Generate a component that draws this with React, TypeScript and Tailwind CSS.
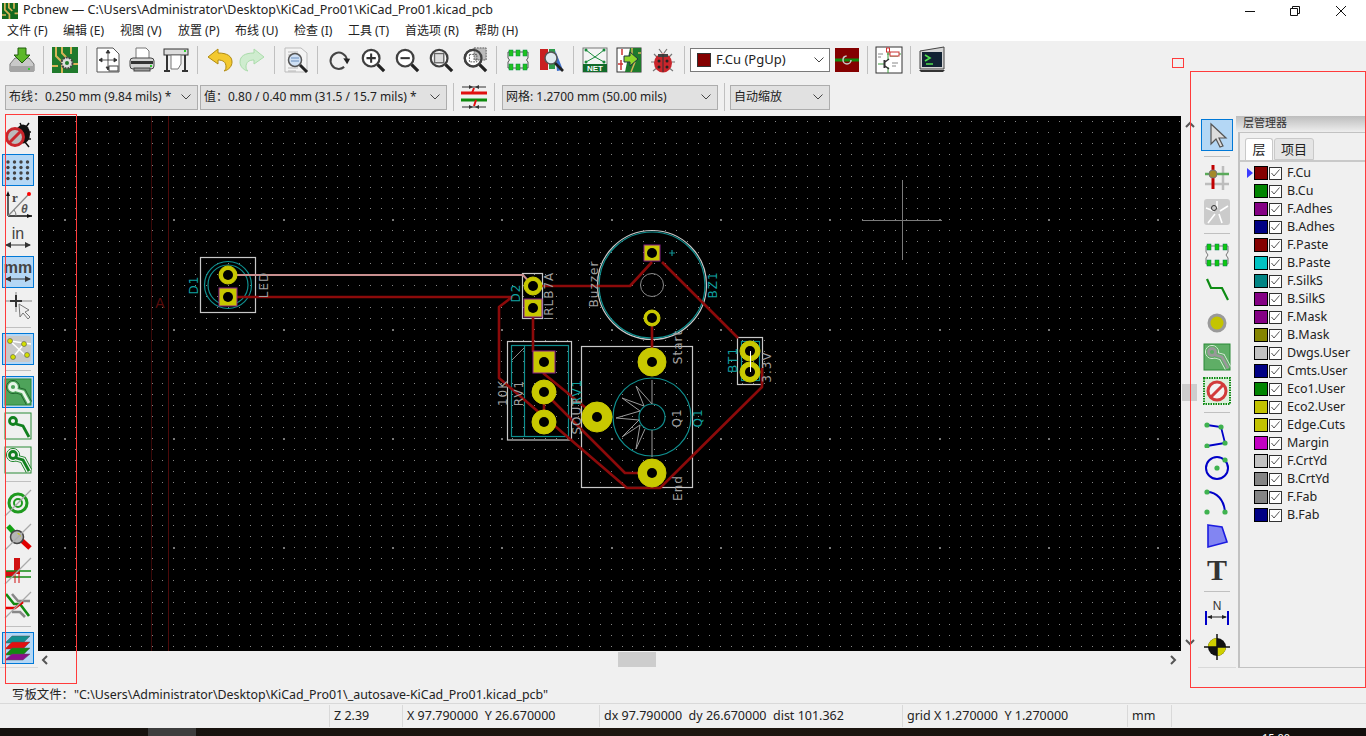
import type { ReactNode } from "react";

const FONT = { ui: "font-['Noto_Sans','Noto_Sans_CJK_SC',sans-serif]" };

const LAYERS: [string, string][] = [
  ["F.Cu", "#840000"],
  ["B.Cu", "#008400"],
  ["F.Adhes", "#840084"],
  ["B.Adhes", "#000084"],
  ["F.Paste", "#840000"],
  ["B.Paste", "#00c2c2"],
  ["F.SilkS", "#008484"],
  ["B.SilkS", "#840084"],
  ["F.Mask", "#840084"],
  ["B.Mask", "#848400"],
  ["Dwgs.User", "#c2c2c2"],
  ["Cmts.User", "#000084"],
  ["Eco1.User", "#008400"],
  ["Eco2.User", "#c2c200"],
  ["Edge.Cuts", "#c2c200"],
  ["Margin", "#c200c2"],
  ["F.CrtYd", "#c2c2c2"],
  ["B.CrtYd", "#848484"],
  ["F.Fab", "#848484"],
  ["B.Fab", "#000084"],
];

const MENUS: [string, string][] = [
  ["文件 (F)", "w-[56px]"],
  ["编辑 (E)", "w-[57px]"],
  ["视图 (V)", "w-[58px]"],
  ["放置 (P)", "w-[57px]"],
  ["布线 (U)", "w-[59px]"],
  ["检查 (I)", "w-[54px]"],
  ["工具 (T)", "w-[57px]"],
  ["首选项 (R)", "w-[70px]"],
  ["帮助 (H)", "w-[56px]"],
];

// tiny icon wrapper, all icons are drawn on a 28 box
const Ico = ({ children, size = 28 }: { children: ReactNode; size?: number }) => (
  <svg width={size} height={size} viewBox="0 0 28 28" fill="none">
    {children}
  </svg>
);

const Btn = ({ children, on }: { children: ReactNode; on?: boolean }) => (
  <div
    className={`w-[32px] h-[32px] my-px flex items-center justify-center shrink-0 border ${
      on ? "bg-[#b4d7f5] border-[#0078d7]" : "border-transparent"
    }`}
  >
    {children}
  </div>
);

const TopBtn = ({ children }: { children: ReactNode }) => (
  <div className="w-[34px] h-[34px] flex items-center justify-center shrink-0">{children}</div>
);

const SepH = () => <div className="w-[26px] h-px bg-[#c0c0c0] my-[4px] shrink-0" />;
const SepV = () => <div className="w-px h-[28px] bg-[#c0c0c0] mx-[4px] shrink-0" />;

const Combo = ({ label, className }: { label: string; className: string }) => (
  <div
    className={`h-[25px] flex items-center justify-between pl-[3px] pr-[6px] bg-[#e1e1e1] border border-[#adadad] text-[12px] text-[#222] whitespace-nowrap ${className}`}
  >
    <span>{label}</span>
    <Chevron />
  </div>
);

const Chevron = () => (
  <svg width="10" height="6" viewBox="0 0 10 6" fill="none">
    <path d="M.5.5 5 5 9.5.5" stroke="#444" />
  </svg>
);

const Field = ({ children, className }: { children?: ReactNode; className: string }) => (
  <div className={`h-full flex items-center pl-[4px] border-r border-[#d9d9d9] whitespace-pre ${className}`}>
    {children}
  </div>
);

const Save = () => (
  <Ico>
    <path d="M2 18 7 12h14l5 6v7H2z" fill="#c9c9c9" stroke="#777" />
    <rect x="2" y="20" width="24" height="6" rx="1" fill="#a5a5a5" />
    <rect x="20" y="22" width="2" height="2" fill="#3c3" />
    <path d="M10 2h8v7h4l-8 8-8-8h4z" fill="#5cb82a" stroke="#1f5d0a" />
  </Ico>
);

const Board = ({ gear }: { gear?: boolean }) => (
  <Ico>
    <rect x="1" y="1" width="26" height="26" fill="#1f7a2c" />
    <path d="M5 1v9l6 6v11M11 1v6l5 5M20 1v7M27 18h-6M1 20h6" stroke="#d8b458" strokeWidth="2" />
    {gear && <circle cx="16" cy="17" r="5.5" fill="#ddd" stroke="#444" strokeWidth="2" strokeDasharray="2 1" />}
    {gear && <circle cx="16" cy="17" r="2" fill="#1f7a2c" />}
  </Ico>
);

const PageSize = () => (
  <Ico>
    <path d="M3 2h16l6 6v18H3z" fill="#fff" stroke="#555" />
    <path d="M14 4v20M5 14h18M14 4l-2 3h4zM14 24l-2-3h4zM5 14l3-2v4zM23 14l-3-2v4z" stroke="#333" fill="#333" strokeWidth=".8" />
    <rect x="15" y="20" width="9" height="5" fill="#fff" stroke="#444" />
  </Ico>
);

const Printer = () => (
  <Ico>
    <path d="M8 2h10l3 3v8H8z" fill="#fff" stroke="#777" />
    <rect x="2" y="12" width="24" height="11" rx="3" fill="#d4d4d4" stroke="#444" />
    <rect x="3" y="15" width="22" height="3" fill="#333" />
    <rect x="6" y="22" width="16" height="3" fill="#999" stroke="#444" />
    <rect x="22" y="19" width="2" height="2" fill="#3c3" />
  </Ico>
);

const Plotter = () => (
  <Ico>
    <rect x="2" y="3" width="24" height="6" fill="#ddd" stroke="#333" />
    <path d="M5 9v16M23 9v16M2 25h6M20 25h6" stroke="#333" strokeWidth="2" />
    <path d="M9 9h10v9l-3 5H9z" fill="#fff" stroke="#777" />
    <rect x="22" y="4" width="2" height="2" fill="#3c3" />
  </Ico>
);

const Undo = ({ redo }: { redo?: boolean }) => (
  <Ico>
    <g transform={redo ? "matrix(-1 0 0 1 28 0)" : undefined}>
      <path
        d="M13 3 3 11l10 7v-4c5 0 8 2 8 7 0 2-1 3-2 4 5-1 8-5 8-9 0-6-5-9-14-9z"
        fill={redo ? "#cfeccf" : "#f3c930"}
        stroke={redo ? "#aadcaa" : "#b08a10"}
      />
    </g>
  </Ico>
);

const Find = () => (
  <Ico>
    <path d="M3 2h16l6 5v19H3z" fill="#f4f4f4" stroke="#bbb" />
    <path d="M6 6h10M6 9h8M6 22h10M6 25h8" stroke="#b9b9b9" />
    <circle cx="13" cy="14" r="6.5" fill="#cfe0f4" stroke="#555" strokeWidth="1.5" />
    <path d="M9 12h8M9 15h8" stroke="#6a8fbd" />
    <path d="m18 19 7 7" stroke="#222" strokeWidth="3" />
  </Ico>
);

const Zoom = ({ kind }: { kind: string }) => (
  <Ico size={26}>
    <circle cx="12" cy="12" r="9" stroke="#404040" strokeWidth="2.4" fill="#fff" />
    <path d="m19 19 7 7" stroke="#222" strokeWidth="3.4" />
    {kind === "in" && <path d="M7 12h10M12 7v10" stroke="#333" strokeWidth="2.2" />}
    {kind === "out" && <path d="M7 12h10" stroke="#333" strokeWidth="2.2" />}
    {kind === "fit" && <rect x="7" y="7" width="10" height="10" fill="#ddd" stroke="#666" strokeWidth="1.5" />}
    {kind === "area" && (
      <>
        <rect x="13" y="1" width="13" height="13" fill="#bbb" stroke="#555" strokeDasharray="2 1" />
        <circle cx="12" cy="12" r="9" stroke="#404040" strokeWidth="2.4" />
        <rect x="8" y="8" width="8" height="8" stroke="#555" strokeDasharray="2 1" />
      </>
    )}
  </Ico>
);

const Refresh = () => (
  <Ico size={24}>
    <path d="M20 22a9.5 9.5 0 1 1 3-9" stroke="#444" strokeWidth="2.4" />
    <path d="m19 12 8 .5-3.5 6.5z" fill="#222" />
  </Ico>
);

const Chip = () => (
  <Ico>
    <path d="M4 6h20v6l-1.500 2 1.500 2v6H4v-6l1.500-2L4 12z" fill="#eee" stroke="#555" />
    {[5, 12, 19].map(x => (
      <g key={x}>
        <rect x={x} y="4" width="4" height="6" fill="#1fc21f" stroke="#084" strokeWidth=".5" />
        <rect x={x} y="18" width="4" height="6" fill="#1fc21f" stroke="#084" strokeWidth=".5" />
      </g>
    ))}
  </Ico>
);

const Library = () => (
  <Ico>
    <path d="M2 3h8v21H2z" fill="#c92020" />
    <path d="M11 3h6v20h-6z" fill="#2e9b4c" />
    <path d="m17 4 8 20-6 1z" fill="#3b6ec9" />
    <circle cx="13" cy="12" r="6" fill="#dfe9ef" stroke="#555" strokeWidth="1.5" />
    <path d="m17 17 8 8" stroke="#222" strokeWidth="2.6" />
  </Ico>
);

const Net = () => (
  <Ico>
    <rect x="2" y="2" width="24" height="24" fill="#f4f4f4" stroke="#777" />
    <path d="M5 4l9 7 9-7M14 11 5 16M14 11l9 5" stroke="#178a3a" />
    <circle cx="5" cy="4" r="1.500" fill="#178a3a" />
    <circle cx="23" cy="4" r="1.500" fill="#178a3a" />
    <circle cx="5" cy="16" r="1.500" fill="#178a3a" />
    <circle cx="23" cy="16" r="1.500" fill="#178a3a" />
    <rect x="2" y="18" width="24" height="8" fill="#126b2b" />
    <text x="14" y="25" textAnchor="middle" fontSize="8" fontWeight="700" fill="#fff" fontFamily="Liberation Sans, sans-serif">NET</text>
  </Ico>
);

const NetSwap = () => (
  <Ico>
    <rect x="2" y="2" width="24" height="24" fill="#fff" stroke="#333" />
    <path d="M15 2h11v24H10z" fill="#1f7a2c" />
    <path d="M17 2v8M23 7h3M16 26l4-10" stroke="#d8b458" strokeWidth="1.500" />
    <path d="M7 3v6M3 18h5M6 14v10" stroke="#c33" strokeWidth="1.500" />
    <path d="M9 10h6V6l8 7-8 7v-4H9z" fill="#8fd62a" stroke="#234" />
  </Ico>
);

const Bug = () => (
  <Ico>
    <path d="M5 8 9 12M23 8l-4 4M2 16h6M26 16h-6M4 25l5-4M24 25l-5-4M10 3l3 4M18 3l-3 4" stroke="#777" strokeWidth="1.200" />
    <ellipse cx="14" cy="17" rx="9" ry="9.500" fill="#c9252b" />
    <path d="M9 8h10v3H9z" fill="#444" />
    <path d="M14 8v18" stroke="#333" />
    <circle cx="10" cy="15" r="1.500" fill="#222" />
    <circle cx="18" cy="15" r="1.500" fill="#222" />
    <circle cx="10" cy="21" r="1.500" fill="#222" />
    <circle cx="18" cy="21" r="1.500" fill="#222" />
  </Ico>
);

const Schematic = () => (
  <Ico>
    <rect x="1" y="1" width="26" height="26" fill="#fff" stroke="#333" />
    <path d="M13 2v6M12 8H26M13 8v6M13 21v6M3 18h6M15 10l8 0" stroke="#3a9a3a" />
    <rect x="15" y="6" width="9" height="4" fill="#fff" stroke="#c33" />
    <rect x="11.500" y="2" width="3" height="4" fill="#fff" stroke="#c33" />
    <path d="m10 16 4-3M10 20l4 3" stroke="#333" strokeWidth="1.500" />
    <path d="M9.500 14v8" stroke="#333" strokeWidth="2" />
    <path d="M3 8h5M3 11h3M17 17h6M17 20h4" stroke="#888" />
  </Ico>
);

const Terminal = () => (
  <Ico>
    <path d="M2 5 26 1v22L2 23z" fill="#d5d5d5" stroke="#444" />
    <rect x="4" y="6" width="20" height="15" fill="#123" />
    <path d="m7 9 5 3-5 3M8 18h7" stroke="#4fe04f" strokeWidth="1.600" />
    <path d="M1 24h26l-2 2H3z" fill="#333" />
  </Ico>
);

const DrcBug = () => (
  <Ico>
    <path d="M16 1l2 4M25 1l-3 4M27 10h-4M27 17h-4M25 25l-4-5" stroke="#111" strokeWidth="1.500" />
    <ellipse cx="19" cy="12" rx="7" ry="9.500" fill="#111" />
    <circle cx="11" cy="15" r="8.500" fill="#bbb" stroke="#c9252b" strokeWidth="3" />
    <path d="m5 21 12-12" stroke="#c9252b" strokeWidth="3" />
  </Ico>
);

const Dots = () => (
  <Ico>
    {[6, 11.500, 17, 22.500].map(y =>
      [4, 10.500, 17, 23.500].map(x => <circle key={`${x}-${y}`} cx={x} cy={y} r="1.700" fill="#444" />)
    )}
  </Ico>
);

const Polar = () => (
  <Ico>
    <path d="M4 26V3M4 26h24" stroke="#111" strokeWidth="1.300" />
    <path d="m4 1-2 5h4zM28 26l-5-2v4z" fill="#111" />
    <path d="M4 26 24 5" stroke="#888" strokeWidth="1.200" />
    <circle cx="25" cy="4" r="2" fill="#f00" />
    <path d="M12 26a8 8 0 0 0-2-6" stroke="#777" />
    <text x="8" y="12" fontSize="13" fontWeight="700" fill="#444" fontFamily="Liberation Serif, serif">r</text>
    <text x="17" y="23" fontSize="12" fontWeight="700" fontStyle="italic" fill="#555" fontFamily="Liberation Sans, sans-serif">θ</text>
  </Ico>
);

const Unit = ({ label, bold }: { label: string; bold?: boolean }) => (
  <Ico>
    <text x="14" y="15" textAnchor="middle" fontSize="16" fontWeight={bold ? "700" : "400"} fill="#444" fontFamily="Liberation Sans, sans-serif">{label}</text>
    <path d="M2 21h24" stroke="#333" />
    <path d="m1 21 6-3v6zM27 21l-6-3v6z" fill="#333" />
  </Ico>
);

const Cursor = () => (
  <Ico>
    <path d="M2 9h26M12 0v20" stroke="#bbb" strokeWidth="2" />
    <path d="M6 9h12M12 3v12" stroke="#333" strokeWidth="2" />
    <path d="m15 12 1 13 3-4 5 6 2-2-5-5 4-2z" fill="#eee" stroke="#777" />
  </Ico>
);

const Rats = () => (
  <div className="w-[26px] h-[26px] rounded-[3px] bg-[#c9c9c9] relative">
    <svg width="26" height="26" viewBox="0 0 26 26" fill="none">
      <path d="M5 5 21 20M19 8 8 21M5 5l21 3" stroke="#fff" strokeWidth="1.500" />
      <circle cx="5" cy="5" r="2.500" fill="#d4e000" stroke="#555" strokeWidth=".6" />
      <circle cx="19" cy="8" r="2.500" fill="#d4e000" stroke="#555" strokeWidth=".6" />
      <circle cx="8" cy="21" r="2.500" fill="#d4e000" stroke="#555" strokeWidth=".6" />
      <circle cx="22" cy="19" r="2.500" fill="#d4e000" stroke="#555" strokeWidth=".6" />
    </svg>
  </div>
);

const PAD_ROUTE = "M12 12l7 2 6 11";

// pad and track shape, optional clearance outline round it
const PadTrack = ({
  back,
  outline,
  color = "#12801f",
}: {
  back?: string;
  outline?: string;
  color?: string;
}) => (
  <Ico>
    <rect x="1" y="1" width="26" height="26" fill={back ?? "none"} stroke="#2a8a36" />
    {outline && (
      <>
        <circle cx="9" cy="9" r="6.500" stroke={outline} strokeWidth="1" />
        <path d={PAD_ROUTE} stroke={outline} strokeWidth="7" />
        <path d={PAD_ROUTE} stroke={back ?? "#f0f0f0"} strokeWidth="5.400" />
        <circle cx="9" cy="9" r="6" fill={back ?? "#f0f0f0"} />
      </>
    )}
    <circle cx="9" cy="9" r="3.500" stroke={color} strokeWidth="2.800" />
    <path d={PAD_ROUTE} stroke={color} strokeWidth="2.800" />
  </Ico>
);

const ViaSketch = () => (
  <Ico>
    <circle cx="14" cy="14" r="9" stroke="#1f9a1f" strokeWidth="3" />
    <circle cx="14" cy="14" r="4" stroke="#1f9a1f" strokeWidth="2" />
    <path d="m1 27 26-26" stroke="#aaa" strokeWidth="1.300" />
  </Ico>
);

const ViaTrack = () => (
  <Ico>
    <path d="M4 3 14 14" stroke="#14a014" strokeWidth="5" />
    <path d="M14 14l12 11" stroke="#e00000" strokeWidth="5" />
    <circle cx="13" cy="14" r="6.500" fill="#b5b5b5" stroke="#444" strokeWidth="1.500" />
    <path d="M13 10a4 4 0 0 1 4 4z" fill="#c8c800" />
    <path d="m1 27 26-26" stroke="#aaa" strokeWidth="1.200" />
  </Ico>
);

const TrackSketch = () => (
  <Ico>
    <rect x="10" y="1" width="6" height="16" fill="#d01010" />
    <rect x="1" y="14" width="9" height="6" fill="#d01010" />
    <path d="M1 14h26M1 20h26" stroke="#128a12" strokeWidth="1.300" />
    <path d="M11 14v12M15 14v12" stroke="#d01010" />
    <path d="m1 27 26-26" stroke="#aaa" strokeWidth="1.200" />
  </Ico>
);

const PairSketch = () => (
  <Ico>
    <path d="m2 3 8 10h6l9 12" stroke="#128a12" strokeWidth="2.600" />
    <path d="m8 3 6 7h12" stroke="#888" strokeWidth="2.600" />
    <path d="M1 17h10l8-6" stroke="#e00000" strokeWidth="2.600" />
    <path d="M8 21h8l5 5" stroke="#888" strokeWidth="2.600" />
    <path d="m1 27 26-26" stroke="#aaa" strokeWidth="1.200" />
  </Ico>
);

const LayerStack = () => (
  <Ico>
    <path d="M8 2h18l-7 7H1z" fill="#148f8f" stroke="#555" strokeWidth=".5" />
    <path d="M8 8h18l-7 7H1z" fill="#e11010" stroke="#555" strokeWidth=".5" />
    <path d="M8 14h18l-7 7H1z" fill="#128a12" stroke="#555" strokeWidth=".5" />
    <path d="M8 20h18l-7 6H1z" fill="#8a0f8a" stroke="#555" strokeWidth=".5" />
  </Ico>
);

const Arrow = () => (
  <Ico>
    <path d="M8 3v20l5-5 4 8 3-1-4-8h7z" fill="#ddd" stroke="#555" strokeWidth="1.200" />
  </Ico>
);

const Highlight = () => (
  <Ico>
    <path d="M2 20h24M20 2v24" stroke="#bdbdbd" strokeWidth="2.500" />
    <path d="M2 10h24" stroke="#5aaa5a" strokeWidth="2.500" />
    <path d="M10 1v24" stroke="#c00000" strokeWidth="3" />
    <circle cx="10" cy="10" r="4" fill="#a38a2a" stroke="#777" />
  </Ico>
);

const LocalRats = () => (
  <div className="w-[26px] h-[26px] rounded-[3px] bg-[#cbcbcb]">
    <svg width="26" height="26" viewBox="0 0 26 26" fill="none">
      <path d="M13 9V2M10 12 2 9M11 15 4 24M15 15l3 9M16 12l8-5" stroke="#fff" strokeWidth="1.600" />
      <circle cx="10" cy="9" r="2.500" stroke="#333" />
    </svg>
  </div>
);

const Footprint = () => (
  <Ico>
    <path d="M3 5h22v6l-2 3 2 3v6H3v-6l2-3-2-3z" fill="#f0f0f0" stroke="#777" />
    {[4, 12, 20].map(x => (
      <g key={x}>
        <rect x={x} y="3" width="4" height="6" fill="#10c810" stroke="#075" strokeWidth=".5" />
        <rect x={x} y="19" width="4" height="6" fill="#10c810" stroke="#075" strokeWidth=".5" />
      </g>
    ))}
  </Ico>
);

const Wire = () => (
  <Ico>
    <path d="M4 4 8 13h11l6 12" stroke="#0e8c14" strokeWidth="2.200" />
  </Ico>
);

const Via = () => (
  <Ico>
    <circle cx="14" cy="14" r="8" fill="#c4c400" stroke="#9a9a9a" strokeWidth="3" />
  </Ico>
);

const Keepout = () => (
  <Ico>
    <rect x="1" y="1" width="26" height="26" fill="#dff0df" stroke="#0e8c14" strokeWidth="2" strokeDasharray="1.500 1" />
    <circle cx="14" cy="14" r="9" fill="#f3f3f3" stroke="#d23b3b" strokeWidth="3" />
    <path d="m8 20 12-12" stroke="#d23b3b" strokeWidth="3" />
  </Ico>
);

const Line = () => (
  <Ico>
    <path d="M4 5 18 7l4 16L4 26" stroke="#0000c8" strokeWidth="1.800" />
    {[[4, 5], [18, 7], [22, 23], [4, 26]].map(([x, y]) => (
      <circle key={x + y} cx={x} cy={y} r="2.600" fill="#3fb24f" />
    ))}
  </Ico>
);

const Circle = () => (
  <Ico>
    <circle cx="14" cy="14" r="11" stroke="#0000c8" strokeWidth="2" />
    <circle cx="14" cy="14" r="2.600" fill="#3fb24f" />
    <circle cx="22" cy="6" r="2.600" fill="#3fb24f" />
  </Ico>
);

const Arc = () => (
  <Ico>
    <path d="M4 4c10 0 17 8 18 20" stroke="#0000c8" strokeWidth="2" />
    <circle cx="4" cy="4" r="2.600" fill="#3fb24f" />
    <circle cx="4" cy="24" r="2.600" fill="#3fb24f" />
    <circle cx="22" cy="24" r="2.600" fill="#3fb24f" />
  </Ico>
);

const Poly = () => (
  <Ico>
    <path d="m5 3 14 2 5 15L5 25z" fill="#8285f2" stroke="#1c1ce0" strokeWidth="1.600" />
  </Ico>
);

const Dim = () => (
  <Ico>
    <text x="14" y="11" textAnchor="middle" fontSize="12" fill="#333" fontFamily="Liberation Sans, sans-serif">N</text>
    <path d="M3 12v14M25 12v14" stroke="#0000c8" strokeWidth="2" />
    <path d="M5 18h18" stroke="#222" />
    <path d="m4 18 5-2v4zM24 18l-5-2v4z" fill="#222" />
  </Ico>
);

const Target = () => (
  <Ico>
    <circle cx="14" cy="14" r="9" fill="#111" />
    <path d="M14 5a9 9 0 0 0-9 9h9zM14 23a9 9 0 0 0 9-9h-9z" fill="#cfcf00" />
    <path d="M1 14h26M14 1v26" stroke="#111" strokeWidth="1.500" />
  </Ico>
);

const LeftTools = () => (
  <div className="w-[38px] shrink-0 flex flex-col items-center pt-[3px] pl-[1px] pr-[3px] h-[552px] border-b border-[#d9d9d9]">
    <Btn><DrcBug /></Btn>
    <Btn on><Dots /></Btn>
    <Btn><Polar /></Btn>
    <Btn><Unit label="in" /></Btn>
    <Btn on><Unit label="mm" bold /></Btn>
    <Btn><Cursor /></Btn>
    <SepH />
    <Btn on><Rats /></Btn>
    <SepH />
    <Btn on><PadTrack back="#4ea35a" color="#e8f5e8" outline="#1c5f28" /></Btn>
    <Btn><PadTrack /></Btn>
    <Btn><PadTrack outline="#12801f" /></Btn>
    <SepH />
    <Btn><ViaSketch /></Btn>
    <Btn><ViaTrack /></Btn>
    <Btn><TrackSketch /></Btn>
    <Btn><PairSketch /></Btn>
    <SepH />
    <Btn on><LayerStack /></Btn>
  </div>
);

const RightTools = () => (
  <div className="w-[38px] shrink-0 flex flex-col items-center pt-[2px] h-[552px] border-b border-[#d9d9d9]">
    <Btn on><Arrow /></Btn>
    <SepH />
    <Btn><Highlight /></Btn>
    <Btn><LocalRats /></Btn>
    <SepH />
    <Btn><Footprint /></Btn>
    <Btn><Wire /></Btn>
    <Btn><Via /></Btn>
    <Btn><PadTrack back="#5fae66" color="#999" outline="#dfeee0" /></Btn>
    <Btn><Keepout /></Btn>
    <SepH />
    <Btn><Line /></Btn>
    <Btn><Circle /></Btn>
    <Btn><Arc /></Btn>
    <Btn><Poly /></Btn>
    <Btn>
      <span className="font-['Liberation_Serif',serif] font-bold text-[30px] leading-none text-[#333]">T</span>
    </Btn>
    <SepH />
    <Btn><Dim /></Btn>
    <Btn><Target /></Btn>
  </div>
);

const LayerPanel = () => (
  <div className="flex-1 h-[552px] flex flex-col">
    <div className="h-[16px] pl-[7px] text-[11px] leading-[13px] text-[#333] bg-gradient-to-b from-[#bdbdbd] to-[#eeeeee]">层管理器</div>
    <div className="ml-[2px] flex-1 border-l-2 border-t border-b border-[#c2c2c2] pt-[4px] pl-[5px]">
      <div className="flex items-end h-[25px] gap-[1px] border-b-2 border-[#c9c9c9] -ml-[5px] pl-[5px]">
        <div className="w-[28px] h-[22px] bg-white border border-b-0 border-[#c9c9c9] rounded-t-[3px] text-center text-[13px] leading-[21px] text-[#222]">层</div>
        <div className="w-[40px] h-[22px] bg-[#e5e5e5] border border-[#c9c9c9] rounded-t-[3px] text-center text-[13px] leading-[21px] text-[#222]">项目</div>
      </div>
      <div className="pt-[2px]">
        {LAYERS.map(([name, color], i) => (
          <div key={name} className="h-[18px] flex items-center text-[12.5px] text-[#222] relative">
            {i === 0 && (
              <svg className="absolute left-[2px] top-[4px]" width="6" height="10" viewBox="0 0 6 10">
                <path d="M0 0 6 5 0 10z" fill="#3c3cff" />
              </svg>
            )}
            <div className="ml-[9px] w-[14px] h-[14px] border border-black" style={{ backgroundColor: color }} />
            <div className="ml-[1px] w-[13px] h-[13px] border border-[#333] bg-white flex items-center justify-center">
              <svg width="9" height="8" viewBox="0 0 9 8" fill="none">
                <path d="M.5 4 3 7 8.500.5" stroke="#555" />
              </svg>
            </div>
            <span className="ml-[5px]">{name}</span>
          </div>
        ))}
      </div>
    </div>
  </div>
);

// page coordinates of the grid dots, every 10th one is brighter
const gridDots = (bright: boolean) => {
  let d = "";
  const step = 10.93;
  for (let i = -22; i < 84; i++) {
    for (let j = -20; j < 30; j++) {
      const isBright = i % 10 === 0 && j % 10 === 0;
      if (isBright !== bright) continue;
      const x = Math.round(282.7 + i * step);
      const y = Math.round(328.7 + j * step);
      d += `M${x} ${y}h${bright ? 2 : 1}v${bright ? 2 : 1}h-${bright ? 2 : 1}z`;
    }
  }
  return d;
};

const Pad = ({ x, y, r, h = 5 }: { x: number; y: number; r: number; h?: number }) => (
  <g>
    <circle cx={x} cy={y} r={r} fill="#c8c800" stroke="#c8c800" />
    <circle cx={x} cy={y} r={h} fill="#000" />
  </g>
);

const SquarePad = ({ x, y, s, h = 5 }: { x: number; y: number; s: number; h?: number }) => (
  <g>
    <rect x={x - s / 2} y={y - s / 2} width={s} height={s} fill="#c8c800" stroke="#8a1f8a" />
    <rect x={x - s / 2 + 1} y={y - s / 2 + 1} width={s - 2} height={s - 2} fill="#c8c800" />
    <circle cx={x} cy={y} r={h} fill="#000" />
  </g>
);

// rotated silkscreen label
const Silk = ({ x, y, t, c = "#a0a0a0", size = 12 }: { x: number; y: number; t: string; c?: string; size?: number }) => (
  <text
    x={x}
    y={y}
    transform={`rotate(-90 ${x} ${y})`}
    textAnchor="middle"
    dominantBaseline="central"
    fontSize={size}
    fill={c}
    letterSpacing="1"
    fontFamily="DejaVu Sans, sans-serif"
  >
    {t}
  </text>
);

const TRACK = "#8c0a0a";
const TEAL = "#10a0a0";

const Canvas = () => (
  <svg className="block w-[1143px] h-[535px] bg-black" viewBox="38 116 1143 535" fill="none">
    <path d={gridDots(false)} fill="#858585" />
    <path d={gridDots(true)} fill="#777" />
    <path d="M151.500 116v535" stroke="#3a0808" />
    <path d="M168.500 116v535" stroke="#4c0a0a" />
    <text x="160" y="308" textAnchor="middle" fontSize="14" fill="#5a0c0c" fontFamily="Liberation Sans, sans-serif">A</text>

    {/* crosshair */}
    <path d="M862 220.500h80M902.500 180v80" stroke="#7a7a7a" />

    {/* footprints */}
    <g stroke="#c8c8c8" strokeWidth="1.200">
      <rect x="200.500" y="257.500" width="55" height="55" />
      <rect x="522.500" y="273.500" width="20" height="45" />
      <rect x="507.500" y="341.500" width="64" height="98.500" />
      <rect x="581.500" y="346.500" width="111" height="141" />
      <rect x="737.500" y="337.500" width="25" height="47" />
      <circle cx="652" cy="285" r="54.500" />
    </g>
    <g stroke="#0f8f8f" strokeWidth="1.200">
      <circle cx="228" cy="285" r="23.500" />
      <circle cx="228" cy="285" r="20" />
      <circle cx="652" cy="285" r="53" />
      <rect x="511.500" y="345.500" width="57" height="91" />
      <path d="M524.500 346v91" />
      <rect x="741.500" y="341.500" width="18" height="39" />
      <circle cx="652" cy="417" r="39" />
      <circle cx="652" cy="417" r="13" />
      <path d="M669 253h6M672 250v6" />
    </g>
    <circle cx="652" cy="285" r="11.500" stroke="#8a8a8a" />
    <path d="M512 360 524 348" stroke="#8a8a8a" />
    <path
      d="M652 380v24L636 386l8 20-22-8 18 13-24 7 23 2-17 17 18-12-4 24 9-20M652 430v27"
      stroke="#9a9a9a"
      strokeWidth="1"
    />

    {/* tracks */}
    <g stroke={TRACK} strokeWidth="2.600" strokeLinejoin="round">
      <path d="M228 297h284l-13 10v71l128 110h33l102-101v-19" />
      <path d="M533 286h97l22-24" />
      <path d="M662 262l76 76" />
      <path d="M533 308v44" />
      <path d="M652 318v44" />
      <path d="M543 373l54 44" />
      <path d="M552 400l73 73h27" />
      <path d="M544 392v30" />
    </g>
    <path d="M228 275h295l9 10" stroke="#c98f8f" strokeWidth="2" />

    {/* pads */}
    <Pad x={228} y={275} r={9} />
    <SquarePad x={228} y={297} s={18} />
    <Pad x={533} y={286} r={9} />
    <SquarePad x={533} y={308} s={18} />
    <SquarePad x={652} y={253} s={16} />
    <Pad x={652} y={318} r={8} />
    <Pad x={652} y={362} r={14} />
    <Pad x={652} y={473} r={14} />
    <Pad x={597} y={417} r={15} />
    <SquarePad x={544} y={362} s={22} />
    <Pad x={544} y={392} r={12} />
    <Pad x={544} y={422} r={12} />
    <Pad x={750} y={351} r={10} />
    <Pad x={750} y={372} r={10} />
    <path d="M750.500 351v21" stroke="#fff" />

    {/* labels */}
    <Silk x={194} y={285} t="D1" c={TEAL} />
    <Silk x={264} y={285} t="LED" />
    <Silk x={516} y={293} t="D2" c={TEAL} />
    <Silk x={549} y={296} t="IRLB7A" />
    <Silk x={594} y={284} t="Buzzer" />
    <Silk x={713} y={285} t="BZ1" c={TEAL} />
    <Silk x={733} y={360} t="BT1" c={TEAL} />
    <Silk x={767} y={367} t="3.3V" />
    <Silk x={678} y={347} t="Start" />
    <Silk x={677} y={418} t="Q1" />
    <Silk x={698} y={418} t="Q1" c={TEAL} />
    <Silk x={678} y={488} t="End" />
    <Silk x={503} y={393} t="10K" />
    <Silk x={519} y={393} t="RV1" />
    <Silk x={577} y={392} t="RV1" c={TEAL} />
    <Silk x={577} y={416} t="SOUT" />
  </svg>
);

const HScroll = () => (
  <div className="h-[17px] flex items-center relative">
    <svg className="ml-[3px]" width="8" height="10" viewBox="0 0 8 10" fill="none">
      <path d="M6 1 2 5l4 4" stroke="#555" strokeWidth="2" />
    </svg>
    <div className="ml-[569px] w-[38px] h-[15px] bg-[#cdcdcd]" />
    <svg className="ml-auto mr-[21px]" width="8" height="10" viewBox="0 0 8 10" fill="none">
      <path d="m2 1 4 4-4 4" stroke="#555" strokeWidth="2" />
    </svg>
  </div>
);

const VScroll = () => (
  <div className="w-[17px] shrink-0 h-[535px] flex flex-col items-center">
    <svg className="mt-[5px]" width="10" height="8" viewBox="0 0 10 8" fill="none">
      <path d="m1 6 4-4 4 4" stroke="#555" strokeWidth="2" />
    </svg>
    <div className="mt-[255px] w-[15px] h-[17px] bg-[#cdcdcd]" />
    <svg className="mt-[237px]" width="10" height="8" viewBox="0 0 10 8" fill="none">
      <path d="m1 2 4 4 4-4" stroke="#555" strokeWidth="2" />
    </svg>
  </div>
);

export default function App() {
  return (
    <div className={`w-[1366px] h-[736px] overflow-hidden relative bg-[#f0f0f0] flex flex-col ${FONT.ui}`}>
      {/* title + menu */}
      <div className="h-[41px] bg-white shrink-0">
        <div className="h-[21px] flex items-center relative">
          <div className="ml-[2px] w-[16px] h-[16px] overflow-hidden">
            <svg width="16" height="16" viewBox="0 0 28 28">
              <rect width="28" height="28" fill="#14691f" />
              <path d="M5 0v12l8 8v8M12 0v8l6 6M21 0v10M28 18h-6M0 21h7" stroke="#d8b458" strokeWidth="3" fill="none" />
            </svg>
          </div>
          <span className="ml-[5px] text-[12.5px] text-[#222] whitespace-nowrap">
            Pcbnew — C:\Users\Administrator\Desktop\KiCad_Pro01\KiCad_Pro01.kicad_pcb
          </span>
          <div className="ml-auto flex items-center">
            <svg className="mr-[35px]" width="10" height="10" viewBox="0 0 10 10"><path d="M0 5.500h10" stroke="#111" /></svg>
            <svg className="mr-[36px]" width="10" height="10" viewBox="0 0 10 10" fill="none"><path d="M.5 2.500h7v7h-7zM2.500 2.500v-2h7v7h-2" stroke="#111" /></svg>
            <svg className="mr-[20px]" width="10" height="10" viewBox="0 0 10 10" fill="none"><path d="m0 0 10 10M10 0 0 10" stroke="#111" /></svg>
          </div>
        </div>
        <div className="h-[20px] flex items-center pl-[7px] text-[12px] text-[#222]">
          {MENUS.map(([m, w]) => (
            <span key={m} className={`${w} whitespace-nowrap`}>{m}</span>
          ))}
        </div>
      </div>

      {/* main toolbar */}
      <div className="h-[40px] shrink-0 flex items-center pl-[5px] pb-[2px]">
        <TopBtn><Save /></TopBtn>
        <SepV />
        <TopBtn><Board gear /></TopBtn>
        <SepV />
        <TopBtn><PageSize /></TopBtn>
        <TopBtn><Printer /></TopBtn>
        <TopBtn><Plotter /></TopBtn>
        <SepV />
        <TopBtn><Undo /></TopBtn>
        <TopBtn><Undo redo /></TopBtn>
        <SepV />
        <TopBtn><Find /></TopBtn>
        <SepV />
        <TopBtn><Refresh /></TopBtn>
        <TopBtn><Zoom kind="in" /></TopBtn>
        <TopBtn><Zoom kind="out" /></TopBtn>
        <TopBtn><Zoom kind="fit" /></TopBtn>
        <TopBtn><Zoom kind="area" /></TopBtn>
        <SepV />
        <TopBtn><Chip /></TopBtn>
        <TopBtn><Library /></TopBtn>
        <SepV />
        <TopBtn><Net /></TopBtn>
        <TopBtn><NetSwap /></TopBtn>
        <TopBtn><Bug /></TopBtn>
        <SepV />
        <div className="ml-[1px] w-[140px] h-[24px] bg-white border border-[#7a7a7a] flex items-center pl-[6px] pr-[5px] text-[13px] text-[#222]">
          <div className="w-[14px] h-[14px] bg-[#840000] border border-[#333]" />
          <span className="ml-[5px]">F.Cu (PgUp)</span>
          <span className="ml-auto"><Chevron /></span>
        </div>
        <div className="ml-[5px] w-[24px] h-[24px] bg-[#840000] relative">
          <svg width="24" height="24" viewBox="0 0 24 24" fill="none">
            <path d="M0 12h24" stroke="#0f8a0f" strokeWidth="3" />
            <circle cx="12" cy="12" r="4" stroke="#c9c9c9" strokeWidth="1.500" strokeDasharray="18 8" />
          </svg>
        </div>
        <div className="ml-[4px]"><SepV /></div>
        <TopBtn><Schematic /></TopBtn>
        <SepV />
        <TopBtn><Terminal /></TopBtn>
      </div>

      {/* aux toolbar */}
      <div className="h-[32px] shrink-0 flex items-center pl-[5px]">
        <Combo label="布线：0.250 mm (9.84 mils) *" className="w-[193px]" />
        <Combo label="值：0.80 / 0.40 mm (31.5 / 15.7 mils) *" className="ml-[2px] w-[247px]" />
        <div className="ml-[2px]"><SepV /></div>
        <div className="w-[26px] h-[26px] ml-[3px]">
          <svg width="26" height="26" viewBox="0 0 26 26" fill="none">
            <path d="M1 3h24M1 23h24" stroke="#333" />
            <path d="M0 9h26" stroke="#e11010" strokeWidth="3" />
            <path d="M0 16h26" stroke="#0d8a0d" strokeWidth="3" />
            <path d="m13 4-2 5M13 22l2-6" stroke="#e11010" strokeWidth="2" />
            <path d="m8 1 4 2-4 2zM18 1l-4 2 4 2zM8 21l4 2-4 2zM18 21l-4 2 4 2z" fill="#333" />
          </svg>
        </div>
        <div className="ml-[3px]"><SepV /></div>
        <Combo label="网格: 1.2700 mm (50.00 mils)" className="ml-[3px] w-[216px]" />
        <div className="ml-[2px]"><SepV /></div>
        <Combo label="自动缩放" className="ml-[1px] w-[100px]" />
      </div>

      {/* work area */}
      <div className="flex flex-1 min-h-0 pt-[3px]">
        <LeftTools />
        <div className="w-[1160px] shrink-0 flex flex-col">
          <div className="flex">
            <Canvas />
            <VScroll />
          </div>
          <HScroll />
        </div>
        <RightTools />
        <LayerPanel />
      </div>

      {/* messages + status */}
      <div className="absolute left-0 right-0 top-[687px] h-[16px] pl-[12px] text-[12.4px] leading-[15px] text-[#222] whitespace-nowrap">
        写板文件："C:\Users\Administrator\Desktop\KiCad_Pro01\_autosave-KiCad_Pro01.kicad_pcb"
      </div>
      <div className="absolute left-0 right-0 top-[703px] h-[25px] border-t border-[#d9d9d9] flex items-center py-[1px] text-[12.5px] text-[#222]">
        <Field className="w-[330px] pl-0" />
        <Field className="w-[73px]">Z 2.39</Field>
        <Field className="w-[197px]">X 97.790000  Y 26.670000</Field>
        <Field className="w-[303px]">dx 97.790000  dy 26.670000  dist 101.362</Field>
        <Field className="w-[225px]">grid X 1.270000  Y 1.270000</Field>
        <Field className="w-[44px]">mm</Field>
      </div>
      <div className="absolute left-0 right-0 top-[728px] h-[8px] overflow-hidden bg-gradient-to-r from-[#15110e] via-[#1e1710] to-[#120e0c]">
        <div className="absolute left-[148px] top-0 w-[48px] h-[8px] bg-[#3d3d3d]" />
        <span className="absolute left-[1262px] top-[4px] text-[11px] leading-[12px] text-white">15:00</span>
      </div>

      {/* red markup drawn over the screenshot */}
      <div className="absolute left-[5px] top-[114px] w-[72px] h-[570px] border border-[#ff3b3b]" />
      <div className="absolute left-[1190px] top-[71px] w-[176px] h-[617px] border border-[#ff3b3b]" />
      <div className="absolute left-[1172px] top-[58px] w-[12px] h-[10px] border border-[#ff3b3b]" />
    </div>
  );
}
